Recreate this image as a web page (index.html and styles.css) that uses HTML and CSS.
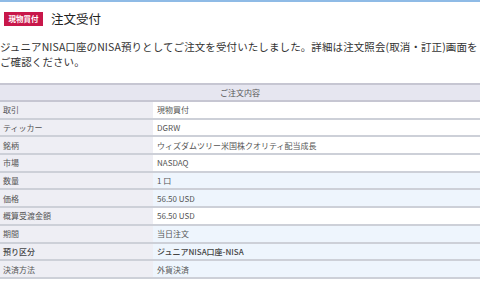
FILE: index.html
```html
<!DOCTYPE html>
<html lang="ja">
<head>
<meta charset="utf-8">
<link rel="stylesheet" href="styles.css">
</head>
<body>
<div class="page">
  <div class="heading">
    <span class="badge">現物買付</span>
    <h1 class="title">注文受付</h1>
  </div>
  <p class="message">ジュニアNISA口座のNISA預りとしてご注文を受付いたしました。詳細は注文照会(取消・訂正)画面をご確認ください。</p>
  <table class="order">
    <colgroup>
      <col class="col-label">
      <col class="col-value">
    </colgroup>
    <thead>
      <tr><th colspan="2">ご注文内容</th></tr>
    </thead>
    <tbody>
      <tr><td class="label">取引</td><td class="value">現物買付</td></tr>
      <tr><td class="label">ティッカー</td><td class="value">DGRW</td></tr>
      <tr><td class="label">銘柄</td><td class="value">ウィズダムツリー米国株クオリティ配当成長</td></tr>
      <tr><td class="label">市場</td><td class="value">NASDAQ</td></tr>
      <tr class="blue"><td class="label">数量</td><td class="value">1 口</td></tr>
      <tr class="blue"><td class="label">価格</td><td class="value">56.50 USD</td></tr>
      <tr><td class="label">概算受渡金額</td><td class="value">56.50 USD</td></tr>
      <tr class="blue"><td class="label">期間</td><td class="value">当日注文</td></tr>
      <tr class="blue"><td class="label strong">預り区分</td><td class="value strong">ジュニアNISA口座-NISA</td></tr>
      <tr class="blue"><td class="label">決済方法</td><td class="value">外貨決済</td></tr>
    </tbody>
  </table>
</div>
</body>
</html>
```

FILE: styles.css
```css
html, body {
  margin: 0;
  padding: 0;
  background: #ffffff;
}

body {
  font-family: "Noto Sans CJK JP", "Noto Sans", sans-serif;
  color: #333333;
}

.page {
  border-top: 2px solid #8fbbe6;
  width: 480px;
  overflow: hidden;
}

.heading {
  display: flex;
  align-items: center;
  gap: 8px;
  padding: 8px 0 0 4px;
  height: 17px;
}

.badge {
  display: inline-flex;
  align-items: center;
  justify-content: center;
  background: #c8174a;
  color: #ffffff;
  font-size: 7.5px;
  font-weight: 700;
  width: 39px;
  height: 14px;
  line-height: 14px;
}

.title {
  margin: 0;
  font-size: 12.5px;
  font-weight: 400;
  color: #222222;
  line-height: 17px;
}

.message {
  margin: 12px 0 0 0;
  font-size: 10.5px;
  letter-spacing: 0.1px;
  line-height: 15px;
  color: #333333;
  height: 44px;
}

.order {
  width: 480px;
  border-collapse: collapse;
  table-layout: fixed;
  font-size: 8px;
  color: #555555;
}

.col-label {
  width: 153px;
}

.order th {
  background: #e6e6f0;
  border-top: 2px solid #c6c6d2;
  border-bottom: 2px solid #c6c6d2;
  font-weight: 400;
  height: 15px;
  padding: 0;
  text-align: center;
  font-size: 8px;
  color: #555555;
}

.order td {
  height: 15.7px;
  padding: 0 0 0 3px;
  border-bottom: 2px solid #cdd0d8;
  white-space: nowrap;
}

.order td.label {
  background: #eeeef4;
}

.order td.value {
  padding-left: 4px;
  background: #ffffff;
}

.order tr.blue td.value {
  background: #eef5fd;
}

.order .strong {
  color: #444444;
  font-weight: 500;
}
```
